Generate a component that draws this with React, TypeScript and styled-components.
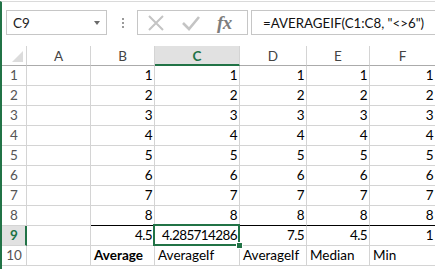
import React from 'react';
import styled, { createGlobalStyle } from 'styled-components';

const GREEN = '#217346';
const GRID = '#d4d4d4';

const GlobalStyle = createGlobalStyle`
  html, body {
    margin: 0;
    background: #ffffff;
  }
  body {
    font-family: Lato, 'Liberation Sans', sans-serif;
    overflow: hidden;
  }
`;

const Window = styled.div`
  width: 433px;
  height: 268px;
  border-left: 2px solid ${GREEN};
  border-top: 1px solid #dadada;
  margin-top: 1px;
  overflow: hidden;
  box-sizing: content-box;
`;

const FormulaBar = styled.div`
  display: flex;
  align-items: center;
  height: 25px;
  padding: 8px 0 11px 4px;
`;

const NameBox = styled.div`
  box-sizing: border-box;
  width: 101px;
  height: 25px;
  border: 1px solid #c6c6c6;
  display: flex;
  align-items: center;
  justify-content: space-between;
  padding: 0 6px 0 6px;
  font-size: 13.5px;
  color: #222;
`;

const Caret = styled.span`
  width: 0;
  height: 0;
  border-left: 3.5px solid transparent;
  border-right: 3.5px solid transparent;
  border-top: 4px solid #6a6a6a;
  margin-top: 1px;
`;

const Grip = styled.div`
  width: 12px;
  margin: 0 8px 0 10px;
  display: flex;
  flex-direction: column;
  align-items: center;
  gap: 2px;
  span {
    width: 2px;
    height: 2px;
    background: #9a9a9a;
  }
`;

const ButtonBox = styled.div`
  box-sizing: border-box;
  width: 111px;
  height: 25px;
  border: 1px solid #c6c6c6;
  display: flex;
  align-items: center;
  padding-left: 9px;
  gap: 16px;
`;

const FxMark = styled.span`
  font-family: 'Liberation Serif', serif;
  font-style: italic;
  font-weight: bold;
  font-size: 19px;
  color: #7d7d7d;
  letter-spacing: -0.5px;
`;

const FormulaInput = styled.div`
  box-sizing: border-box;
  flex: 1;
  height: 25px;
  margin-left: 3px;
  margin-right: -4px;
  border: 1px solid #c6c6c6;
  display: flex;
  align-items: center;
  padding-left: 11px;
  font-size: 13.3px;
  color: #111;
  white-space: nowrap;
`;

const Sheet = styled.div`
  display: grid;
  grid-template-columns: 25px 64px 64px 85px 67px 63px 66px;
  grid-auto-rows: 20px;
`;

const Corner = styled.div`
  box-sizing: border-box;
  border-right: 1px solid ${GRID};
  border-bottom: 1px solid #ababab;
  position: relative;
  &::after {
    content: '';
    position: absolute;
    right: 3px;
    bottom: 3px;
    width: 0;
    height: 0;
    border-left: 11px solid transparent;
    border-bottom: 11px solid #dcdcdc;
  }
`;

const ColHead = styled.div<{ $active?: boolean }>`
  box-sizing: border-box;
  display: flex;
  align-items: center;
  justify-content: center;
  font-size: 13.5px;
  border-right: 1px solid ${GRID};
  border-bottom: ${p => (p.$active ? `2px solid ${GREEN}` : '1px solid #ababab')};
  background: ${p => (p.$active ? '#e1e1e1' : '#ffffff')};
  color: ${p => (p.$active ? GREEN : '#444')};
  font-weight: ${p => (p.$active ? 700 : 400)};
  padding-top: ${p => (p.$active ? '1px' : '0')};
`;

const RowHead = styled.div<{ $active?: boolean }>`
  box-sizing: border-box;
  display: flex;
  align-items: flex-end;
  justify-content: center;
  padding-bottom: 1px;
  line-height: 18px;
  font-size: 13.5px;
  border-bottom: 1px solid ${GRID};
  border-right: ${p => (p.$active ? `2px solid ${GREEN}` : `1px solid ${GRID}`)};
  background: ${p => (p.$active ? '#e1e1e1' : '#ffffff')};
  color: ${p => (p.$active ? GREEN : '#555')};
  font-weight: ${p => (p.$active ? 700 : 400)};
  padding-left: ${p => (p.$active ? '1px' : '0')};
`;

const Cell = styled.div<{ $num?: boolean; $bold?: boolean; $rule?: boolean; $selected?: boolean }>`
  box-sizing: border-box;
  position: relative;
  display: flex;
  align-items: flex-end;
  justify-content: ${p => (p.$num ? 'flex-end' : 'flex-start')};
  padding: 0 2px 1px 3px;
  font-size: 13.5px;
  line-height: 18px;
  letter-spacing: ${p => (p.$num ? '-0.6px' : '0')};
  color: #000;
  font-weight: ${p => (p.$bold ? 700 : 400)};
  border-right: 1px solid ${GRID};
  border-bottom: 1px solid ${p => (p.$rule ? '#000' : GRID)};
  white-space: nowrap;

  ${p =>
    p.$selected &&
    `
    &::after {
      content: '';
      position: absolute;
      top: -2px;
      left: -2px;
      right: -1px;
      bottom: -1px;
      border: 2px solid ${GREEN};
      pointer-events: none;
    }
    &::before {
      content: '';
      position: absolute;
      right: -4px;
      bottom: -4px;
      width: 5px;
      height: 5px;
      background: ${GREEN};
      border: 1px solid #fff;
      z-index: 2;
    }
  `}
`;

type CellData = { v: string; num?: boolean; bold?: boolean };

const columns = ['A', 'B', 'C', 'D', 'E', 'F'];

const numberRow = (n: number): CellData[] => [
  { v: '' },
  ...Array.from({ length: 5 }, () => ({ v: String(n), num: true })),
];

const rows: CellData[][] = [
  ...[1, 2, 3, 4, 5, 6, 7, 8].map(numberRow),
  [
    { v: '' },
    { v: '4.5', num: true },
    { v: '4.285714286', num: true },
    { v: '7.5', num: true },
    { v: '4.5', num: true },
    { v: '1', num: true },
  ],
  [
    { v: '' },
    { v: 'Average', bold: true },
    { v: 'AverageIf' },
    { v: 'AverageIf' },
    { v: 'Median' },
    { v: 'Min' },
  ],
];

const CrossIcon = () => (
  <svg width="18" height="18" viewBox="0 0 18 18">
    <path d="M2 2 L16 16 M16 2 L2 16" stroke="#c4c4c4" strokeWidth="2" fill="none" />
  </svg>
);

const CheckIcon = () => (
  <svg width="20" height="18" viewBox="0 0 20 18">
    <path d="M2 9 L8 15 L18 3" stroke="#c4c4c4" strokeWidth="2.6" fill="none" />
  </svg>
);

const App: React.FC = () => {
  const activeRow = 9;
  const activeCol = 'C';

  return (
    <Window>
      <GlobalStyle />
      <FormulaBar>
        <NameBox>
          C9
          <Caret />
        </NameBox>
        <Grip>
          <span />
          <span />
          <span />
        </Grip>
        <ButtonBox>
          <CrossIcon />
          <CheckIcon />
          <FxMark>fx</FxMark>
        </ButtonBox>
        <FormulaInput>=AVERAGEIF(C1:C8, "&lt;&gt;6")</FormulaInput>
      </FormulaBar>

      <Sheet>
        <Corner />
        {columns.map(c => (
          <ColHead key={c} $active={c === activeCol}>
            {c}
          </ColHead>
        ))}
        {rows.map((row, ri) => (
          <React.Fragment key={ri}>
            <RowHead $active={ri + 1 === activeRow}>{ri + 1}</RowHead>
            {row.map((cell, ci) => (
              <Cell
                key={ci}
                $num={cell.num}
                $bold={cell.bold}
                $rule={ri === 7 && ci > 0}
                $selected={ri + 1 === activeRow && columns[ci] === activeCol}
              >
                {cell.v}
              </Cell>
            ))}
          </React.Fragment>
        ))}
      </Sheet>
    </Window>
  );
};

export default App;
